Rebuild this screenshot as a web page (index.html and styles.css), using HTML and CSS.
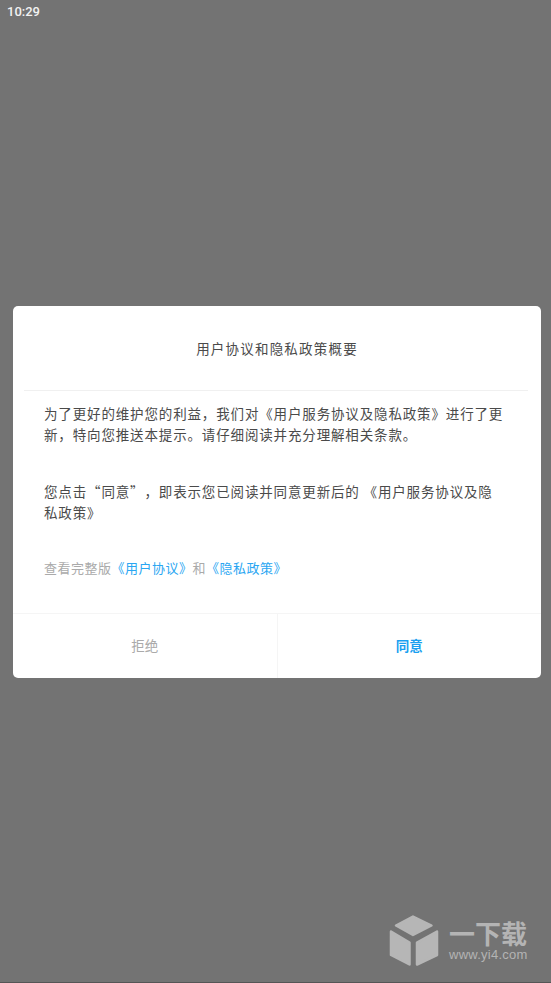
FILE: index.html
```html
<!DOCTYPE html>
<html lang="zh-CN">
<head>
  <meta charset="UTF-8" />
  <title>用户协议和隐私政策概要</title>
  <link rel="stylesheet" href="styles.css">
</head>
<body>
  <div class="status-bar">10:29</div>

  <!-- 弹窗 -->
  <div class="dialog">
    <div class="dialog-title">用户协议和隐私政策概要</div>
    <div class="dialog-body">
      <p class="para-first">为了更好的维护您的利益，我们对《用户服务协议及隐私政策》进行了更新，特向您推送本提示。请仔细阅读并充分理解相关条款。</p>
      <p class="para-second">您点击“同意”，即表示您已阅读并同意更新后的 《用户服务协议及隐私政策》</p>
      <p class="para-links">查看完整版<a>《用户协议》</a>和<a>《隐私政策》</a></p>
    </div>
    <div class="dialog-buttons">
      <div class="btn btn-refuse">拒绝</div>
      <div class="btn btn-agree">同意</div>
    </div>
  </div>

  <!-- 水印 -->
  <div class="watermark">
    <svg class="watermark-logo" width="50" height="53" viewBox="0 0 50 53">
      <g fill="#b6b6b6" stroke="#b6b6b6" stroke-width="2.500" stroke-linejoin="round">
        <path d="M24 2.500 L42.500 11.500 L24 21 L7 11.500 Z" />
        <path d="M2 17.500 L20.500 28.500 L20.500 50.500 L2 41 Z" />
        <path d="M48 17.500 L28 28.500 L28 50.500 L48 41 Z" />
      </g>
    </svg>
    <div class="watermark-text">
      <div class="watermark-name">一下载</div>
      <div class="watermark-url">www.yi4.com</div>
    </div>
  </div>
</body>
</html>
```

FILE: styles.css
```css
html, body {
  height: 100%;
}
body {
  margin: 0;
  position: relative;
  box-sizing: border-box;
  height: 983px;
  overflow: hidden;
  background: #737373;
  border-bottom: 1px solid #555;
  font-family: "Noto Sans CJK SC", "Liberation Sans", sans-serif;
  text-spacing-trim: space-all;
}

/* --- 状态栏 --- */
.status-bar {
  height: 22px;
  padding-left: 7px;
  line-height: 23px;
  font-family: Roboto, sans-serif;
  font-size: 13px;
  font-weight: 500;
  color: #f2f2f2;
}

/* --- 弹窗 --- */
.dialog {
  margin: 284px 10px 0 13px;
  height: 372px;
  display: flex;
  flex-direction: column;
  background: #fff;
  border-radius: 5px;
}
.dialog-title {
  flex: none;
  height: 84px;
  margin: 0 13px 0 11px;
  padding-left: 2px;
  border-bottom: 1px solid #f0f0f0;
  line-height: 84px;
  text-align: center;
  font-size: 13.5px;
  letter-spacing: 1.2px;
  color: #4a4a4a;
}
.dialog-body {
  flex: 1;
  padding: 0 36px 0 31px;
}
.dialog-body p {
  margin: 0;
  font-size: 13.5px;
  line-height: 21px;
  letter-spacing: 0.85px;
  color: #4a4a4a;
}
.dialog-body .para-first {
  margin-top: 12px;
}
.dialog-body .para-second {
  margin-top: 36px;
}
.dialog-body .para-links {
  margin-top: 34px;
  font-size: 13px;
  color: #aaa;
  letter-spacing: 0.5px;
}
.para-links a {
  color: #2aa6f2;
}

/* --- 按钮 --- */
.dialog-buttons {
  flex: none;
  height: 64px;
  display: flex;
  border-top: 1px solid #f5f5f5;
}
.btn {
  flex: 1;
  line-height: 62px;
  text-align: center;
  font-size: 13.5px;
}
.btn-refuse {
  color: #aaa;
  border-right: 1px solid #f5f5f5;
}
.btn-agree {
  color: #1a9ff0;
  font-weight: 700;
}

/* --- 水印 --- */
.watermark {
  position: absolute;
  left: 389px;
  top: 914px;
  display: flex;
  gap: 10px;
  color: #b4b4b4;
}
.watermark-text {
  padding-top: 6px;
}
.watermark-name {
  font-size: 26px;
  line-height: 26px;
  font-weight: 700;
}
.watermark-url {
  margin-top: 2px;
  font-family: "Liberation Sans", sans-serif;
  font-size: 13px;
  line-height: 14px;
  letter-spacing: 0.25px;
}
```
